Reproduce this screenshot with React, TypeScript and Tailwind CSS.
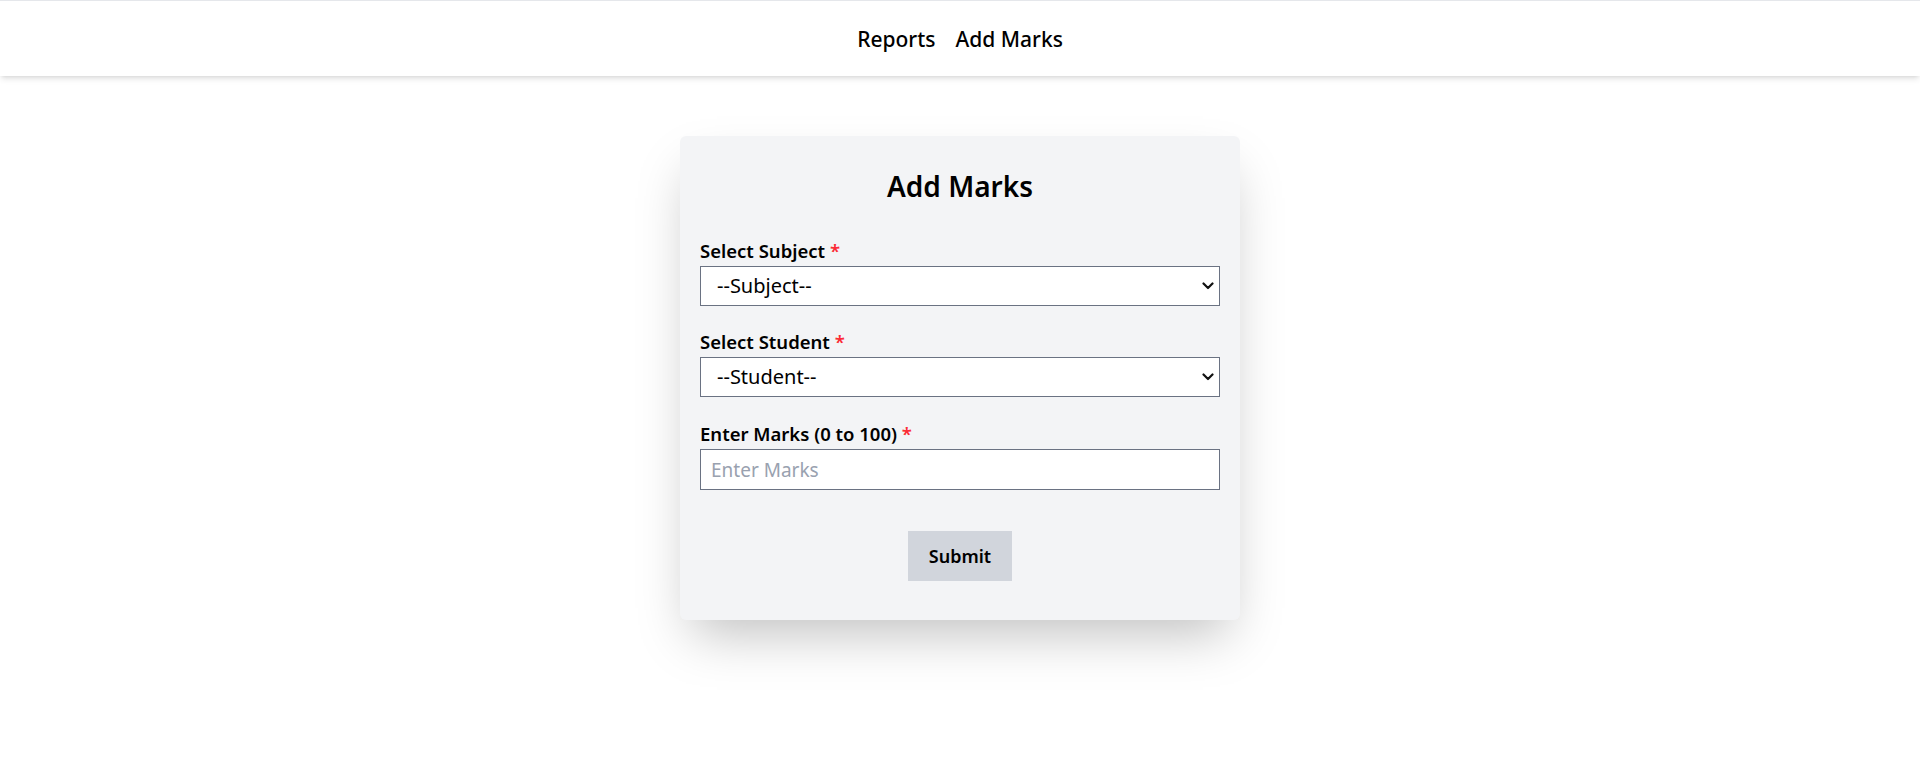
import React from "react";

function Chevron() {
  return (
    <svg
      className="pointer-events-none absolute right-[6px] top-1/2 -translate-y-1/2"
      width="12"
      height="8"
      viewBox="0 0 12 8"
      fill="none"
    >
      <path d="M1.5 1.5 L6 6 L10.5 1.5" stroke="#111" strokeWidth="2.2" strokeLinecap="round" strokeLinejoin="round" />
    </svg>
  );
}

function Label({ text }: { text: string }) {
  return (
    <label className="block text-[18.5px] leading-7 font-semibold text-black mb-px">
      {text} <span className="text-red-500">*</span>
    </label>
  );
}

function Select({ placeholder }: { placeholder: string }) {
  return (
    <div className="relative">
      <select
        defaultValue=""
        className="block w-full h-10 appearance-none bg-white border border-gray-500 pl-4 pr-8 text-[20px] leading-7 text-black outline-none rounded-none"
      >
        <option value="">{placeholder}</option>
      </select>
      <Chevron />
    </div>
  );
}

export default function App() {
  return (
    <div
      className="min-h-[772px] bg-white text-black"
      style={{ fontFamily: '"Noto Sans", "Open Sans", sans-serif' }}
    >
      <nav className="h-[76px] border-t border-gray-200 bg-white shadow-md flex items-center justify-center gap-5">
        <a className="text-[21px] leading-7 font-medium text-black cursor-pointer">Reports</a>
        <a className="text-[21px] leading-7 font-medium text-black cursor-pointer">Add Marks</a>
      </nav>

      <div className="mt-[60px] mx-auto w-[560px] bg-gray-100 rounded-md shadow-2xl px-5 pt-8 pb-[39px]">
        <h1 className="text-center text-[28px] leading-9 font-semibold text-black mb-[33px]">Add Marks</h1>

        <div className="mb-[22px]">
          <Label text="Select Subject" />
          <Select placeholder="--Subject--" />
        </div>

        <div className="mb-[23px]">
          <Label text="Select Student" />
          <Select placeholder="--Student--" />
        </div>

        <div>
          <Label text="Enter Marks (0 to 100)" />
          <input
            type="text"
            placeholder="Enter Marks"
            className="block w-full h-[41px] bg-white border border-gray-500 px-2.5 text-[19px] leading-7 text-black placeholder:text-gray-400 outline-none rounded-none"
          />
        </div>

        <div className="mt-[41px] flex justify-center">
          <button className="w-[104px] h-[50px] bg-gray-300 text-[18px] leading-7 font-semibold text-black">
            Submit
          </button>
        </div>
      </div>
    </div>
  );
}
